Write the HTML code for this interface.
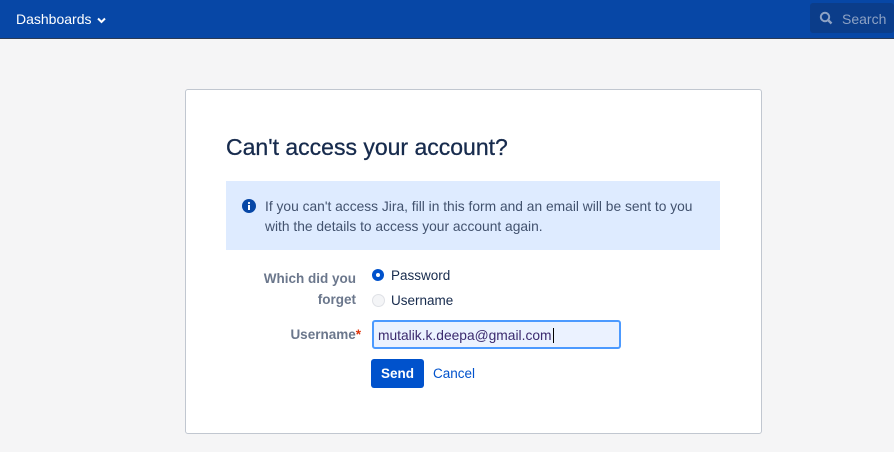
<!DOCTYPE html>
<html><head><style>
body{margin:0;width:894px;height:452px;background:#f5f5f6;font-family:"Liberation Sans",sans-serif;overflow:hidden;position:relative}
.hdr{position:absolute;left:0;top:0;width:894px;height:38px;background:#0747a6;border-bottom:1px solid #2a3a55}
.dash{position:absolute;left:16px;top:11px;color:#fff;font-size:14px}
.srch{position:absolute;left:810px;top:3px;width:84px;height:30px;background:#0b3d8a;border-radius:3px;color:#8da2c4;font-size:14px}
.card{position:absolute;left:185px;top:89px;width:575px;height:343px;background:#fff;border:1px solid #c1c7d0;border-radius:3px}
h1{position:absolute;left:40px;top:44px;margin:0;font-size:23px;font-weight:normal;color:#172b4d;-webkit-text-stroke:0.3px #172b4d}
.info{position:absolute;left:40px;top:91px;width:494px;height:69px;background:#deebff;font-size:13.8px;color:#42526e;line-height:20px}
.info p{margin:0;position:absolute;left:39px;top:16px}
.lbl{position:absolute;color:#6b778c;font-size:13.5px;font-weight:bold;text-align:right}
.opt{position:absolute;font-size:13.5px;color:#172b4d}
.rad{position:absolute;width:12px;height:12px;border-radius:50%}
</style></head><body>
<div class="hdr"><div class="dash">Dashboards <svg width="9" height="7" viewBox="0 0 9 7" style="margin-left:2px"><path d="M1 1.5L4.5 5 8 1.5" stroke="#fff" stroke-width="2" fill="none"/></svg></div>
<div class="srch"><svg width="14" height="14" viewBox="0 0 14 14" style="position:absolute;left:9px;top:8px"><circle cx="6" cy="6" r="4.2" stroke="#8da2c4" stroke-width="2" fill="none"/><path d="M9 9l3.5 3.5" stroke="#8da2c4" stroke-width="2.4"/></svg><span style="position:absolute;left:32px;top:8px">Search</span></div></div>
<div class="card">
<h1>Can't access your account?</h1>
<div class="info"><svg width="14" height="14" viewBox="0 0 14 14" style="position:absolute;left:16px;top:18px"><circle cx="7" cy="7" r="7" fill="#0747a6"/><rect x="6" y="6" width="2" height="5" fill="#fff"/><circle cx="7" cy="4" r="1.1" fill="#fff"/></svg><p>If you can't access Jira, fill in this form and an email will be sent to you<br>with the details to access your account again.</p></div>
<div class="lbl" style="left:60px;top:178px;width:110px;line-height:21px">Which did you<br>forget</div>
<div class="rad" style="left:186px;top:179px;background:#0052cc"><div style="position:absolute;left:4px;top:4px;width:4px;height:4px;border-radius:50%;background:#fff"></div></div>
<div class="opt" style="left:205px;top:178px">Password</div>
<div class="rad" style="left:186px;top:204px;background:#f4f5f7;border:1px solid #dfe1e6;width:11px;height:11px"></div>
<div class="opt" style="left:205px;top:203px">Username</div>
<div class="lbl" style="left:60px;top:237px;width:115px">Username<span style="color:#de350b">*</span></div>
<div style="position:absolute;left:186px;top:230px;width:249px;height:29px;background:#ebf2ff;border:2px solid #4c9aff;border-radius:3px;box-sizing:border-box"><span style="position:absolute;left:4px;top:6px;font-size:13.8px;color:#3b2a6e">mutalik.k.deepa@gmail.com<span style="border-left:1px solid #000;margin-left:1px"></span></span></div>
<div style="position:absolute;left:185px;top:269px;width:53px;height:29px;background:#0052cc;border-radius:3px;color:#fff;font-weight:bold;font-size:13.5px;text-align:center;line-height:29px">Send</div>
<div style="position:absolute;left:247px;top:276px;color:#0052cc;font-size:13.5px">Cancel</div>
</div>
</body></html>
